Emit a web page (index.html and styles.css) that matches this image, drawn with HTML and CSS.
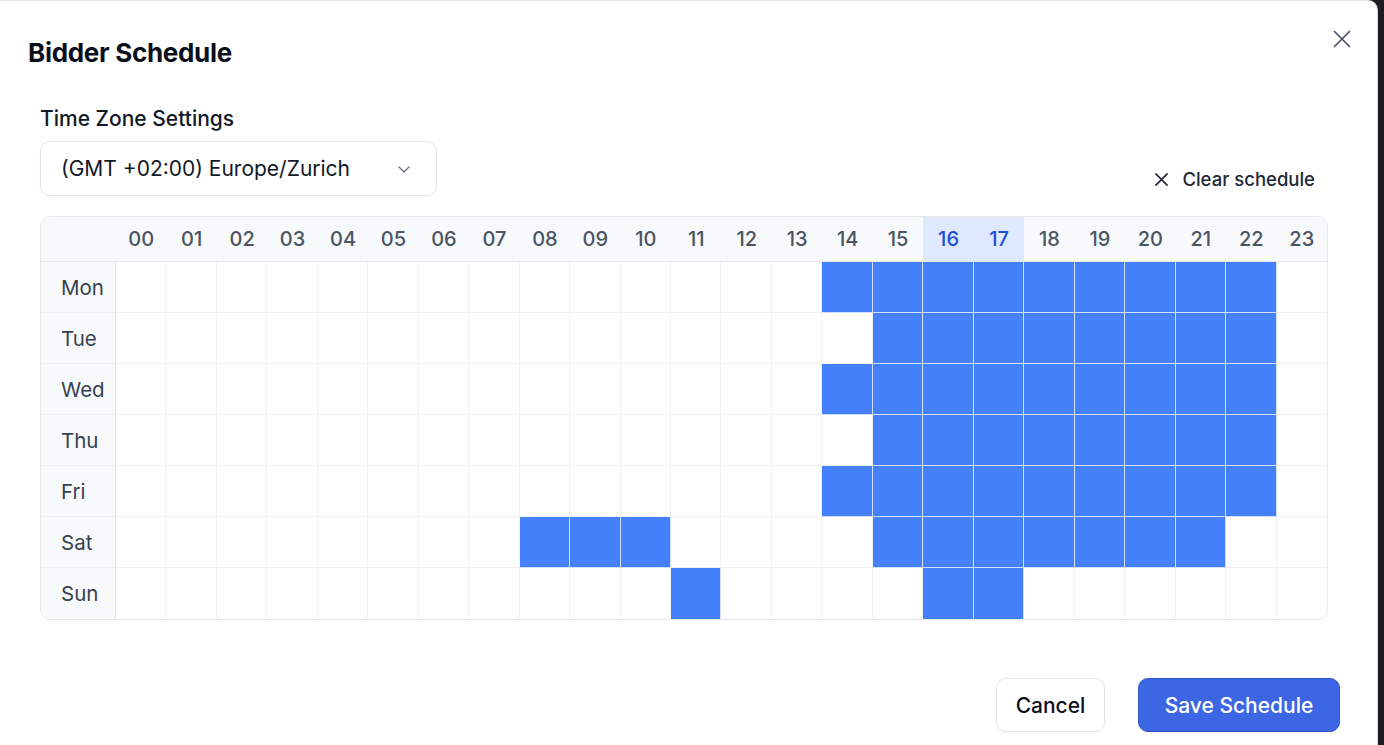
FILE: index.html
```html
<!DOCTYPE html>
<html>
<head>
<meta charset="utf-8">
<link rel="stylesheet" href="styles.css">
</head>
<body>
<div class="modal">
  <div class="head">
    <h1 class="title">Bidder Schedule</h1>
    <button class="close" aria-label="Close">
      <svg width="18" height="18" viewBox="0 0 18 18"><path d="M1.5 1.5L16.5 16.5M16.5 1.5L1.5 16.5" stroke="#4b5563" stroke-width="1.7" stroke-linecap="round"/></svg>
    </button>
  </div>
  <div class="body">
    <div class="label">Time Zone Settings</div>
    <div class="tzrow">
      <div class="select">
        <span>(GMT +02:00) Europe/Zurich</span>
        <svg width="16" height="16" viewBox="0 0 16 16"><path d="M3 6l5 5 5-5" fill="none" stroke="#6b7280" stroke-width="1.4" stroke-linecap="round" stroke-linejoin="round"/></svg>
      </div>
      <button class="clear">
        <svg width="15" height="15" viewBox="0 0 16 16"><path d="M2 2L14 14M14 2L2 14" stroke="#1f2937" stroke-width="1.7" stroke-linecap="round"/></svg>
        <span>Clear schedule</span>
      </button>
    </div>
    <div class="grid">
      <div class="hc corner"></div>
      <div class="hc">00</div><div class="hc">01</div><div class="hc">02</div><div class="hc">03</div><div class="hc">04</div><div class="hc">05</div><div class="hc">06</div><div class="hc">07</div><div class="hc">08</div><div class="hc">09</div><div class="hc">10</div><div class="hc">11</div><div class="hc">12</div><div class="hc">13</div><div class="hc">14</div><div class="hc">15</div><div class="hc hl">16</div><div class="hc hl">17</div><div class="hc">18</div><div class="hc">19</div><div class="hc">20</div><div class="hc">21</div><div class="hc">22</div><div class="hc last">23</div>

      <div class="day">Mon</div>
      <div class="c"></div><div class="c"></div><div class="c"></div><div class="c"></div><div class="c"></div><div class="c"></div><div class="c"></div><div class="c"></div><div class="c"></div><div class="c"></div><div class="c"></div><div class="c"></div><div class="c"></div><div class="c"></div><div class="c on"></div><div class="c on"></div><div class="c on"></div><div class="c on"></div><div class="c on"></div><div class="c on"></div><div class="c on"></div><div class="c on"></div><div class="c on"></div><div class="c last"></div>

      <div class="day">Tue</div>
      <div class="c"></div><div class="c"></div><div class="c"></div><div class="c"></div><div class="c"></div><div class="c"></div><div class="c"></div><div class="c"></div><div class="c"></div><div class="c"></div><div class="c"></div><div class="c"></div><div class="c"></div><div class="c"></div><div class="c"></div><div class="c on"></div><div class="c on"></div><div class="c on"></div><div class="c on"></div><div class="c on"></div><div class="c on"></div><div class="c on"></div><div class="c on"></div><div class="c last"></div>

      <div class="day">Wed</div>
      <div class="c"></div><div class="c"></div><div class="c"></div><div class="c"></div><div class="c"></div><div class="c"></div><div class="c"></div><div class="c"></div><div class="c"></div><div class="c"></div><div class="c"></div><div class="c"></div><div class="c"></div><div class="c"></div><div class="c on"></div><div class="c on"></div><div class="c on"></div><div class="c on"></div><div class="c on"></div><div class="c on"></div><div class="c on"></div><div class="c on"></div><div class="c on"></div><div class="c last"></div>

      <div class="day">Thu</div>
      <div class="c"></div><div class="c"></div><div class="c"></div><div class="c"></div><div class="c"></div><div class="c"></div><div class="c"></div><div class="c"></div><div class="c"></div><div class="c"></div><div class="c"></div><div class="c"></div><div class="c"></div><div class="c"></div><div class="c"></div><div class="c on"></div><div class="c on"></div><div class="c on"></div><div class="c on"></div><div class="c on"></div><div class="c on"></div><div class="c on"></div><div class="c on"></div><div class="c last"></div>

      <div class="day">Fri</div>
      <div class="c"></div><div class="c"></div><div class="c"></div><div class="c"></div><div class="c"></div><div class="c"></div><div class="c"></div><div class="c"></div><div class="c"></div><div class="c"></div><div class="c"></div><div class="c"></div><div class="c"></div><div class="c"></div><div class="c on"></div><div class="c on"></div><div class="c on"></div><div class="c on"></div><div class="c on"></div><div class="c on"></div><div class="c on"></div><div class="c on"></div><div class="c on"></div><div class="c last"></div>

      <div class="day">Sat</div>
      <div class="c"></div><div class="c"></div><div class="c"></div><div class="c"></div><div class="c"></div><div class="c"></div><div class="c"></div><div class="c"></div><div class="c on"></div><div class="c on"></div><div class="c on"></div><div class="c"></div><div class="c"></div><div class="c"></div><div class="c"></div><div class="c on"></div><div class="c on"></div><div class="c on"></div><div class="c on"></div><div class="c on"></div><div class="c on"></div><div class="c on"></div><div class="c"></div><div class="c last"></div>

      <div class="day bottom">Sun</div>
      <div class="c bottom"></div><div class="c bottom"></div><div class="c bottom"></div><div class="c bottom"></div><div class="c bottom"></div><div class="c bottom"></div><div class="c bottom"></div><div class="c bottom"></div><div class="c bottom"></div><div class="c bottom"></div><div class="c bottom"></div><div class="c bottom on"></div><div class="c bottom"></div><div class="c bottom"></div><div class="c bottom"></div><div class="c bottom"></div><div class="c bottom on"></div><div class="c bottom on"></div><div class="c bottom"></div><div class="c bottom"></div><div class="c bottom"></div><div class="c bottom"></div><div class="c bottom"></div><div class="c bottom last"></div>
    </div>
  </div>
  <div class="foot">
    <button class="btn cancel">Cancel</button>
    <button class="btn save">Save Schedule</button>
  </div>
</div>
</body>
</html>
```
FILE: styles.css
```css
html, body {
  margin: 0;
  padding: 0;
}
body {
  background: #1c1c1e;
  width: 1384px;
  height: 745px;
  overflow: hidden;
  font-family: Inter, "Noto Sans", "Liberation Sans", sans-serif;
}
.modal {
  box-sizing: border-box;
  width: 1378px;
  height: 745px;
  background: #ffffff;
  border-top: 1px solid #e6e7ea;
  border-right: 1px solid #d9dadd;
  border-top-right-radius: 10px;
  display: flex;
  flex-direction: column;
}
.head {
  display: flex;
  justify-content: space-between;
  align-items: flex-start;
  padding: 36px 21px 0 28px;
}
.title {
  margin: 0;
  font-size: 26px;
  line-height: 32px;
  font-weight: 700;
  letter-spacing: -0.3px;
  color: #0b0f1a;
}
.close {
  border: 0;
  background: transparent;
  padding: 0;
  margin-top: -12px;
  width: 28px;
  height: 28px;
  display: flex;
  align-items: center;
  justify-content: center;
  cursor: pointer;
}
.body {
  padding: 0 50px 0 40px;
}
.label {
  margin-top: 38px;
  font-size: 21px;
  line-height: 24px;
  font-weight: 500;
  color: #111827;
}
.tzrow {
  margin-top: 10px;
  display: flex;
  justify-content: space-between;
  align-items: flex-start;
}
.select {
  box-sizing: border-box;
  width: 397px;
  height: 55px;
  border: 1px solid #e3e5e8;
  border-radius: 10px;
  box-shadow: 0 1px 2px rgba(0, 0, 0, 0.04);
  display: flex;
  align-items: center;
  justify-content: space-between;
  padding: 0 24px 0 20px;
  font-size: 21px;
  color: #111827;
}
.clear {
  margin-top: 27px;
  border: 0;
  background: transparent;
  display: flex;
  align-items: center;
  gap: 13px;
  padding: 0 12px 0 12px;
  font-family: inherit;
  font-size: 18.5px;
  font-weight: 500;
  color: #1f2937;
  cursor: pointer;
}
.grid {
  margin-top: 20px;
  box-sizing: border-box;
  width: 1288px;
  display: grid;
  grid-template-columns: 75px repeat(24, 1fr);
  grid-template-rows: 45px repeat(7, 51px);
  border: 1px solid #e6e8eb;
  border-radius: 10px;
  overflow: hidden;
}
.hc {
  background: #f8f9fb;
  border-bottom: 1px solid #e6e8eb;
  display: flex;
  align-items: center;
  justify-content: center;
  font-size: 20px;
  font-weight: 500;
  color: #4b5563;
}
.hc.hl {
  background: #dfe9fd;
  color: #1d4ed8;
}
.day {
  background: #f8f9fb;
  border-right: 1px solid #e6e8eb;
  border-bottom: 1px solid #f0f1f3;
  display: flex;
  align-items: center;
  padding-left: 20px;
  font-size: 20.5px;
  color: #374151;
}
.c {
  border-right: 1px solid #f0f1f3;
  border-bottom: 1px solid #f0f1f3;
  background: #ffffff;
}
.c.on {
  background: #4380fa;
  border-right-color: #d3def8;
  border-bottom-color: #d3def8;
}
.c.last {
  border-right: 0;
}
.bottom {
  border-bottom: 0;
}
.foot {
  margin-top: auto;
  display: flex;
  justify-content: flex-end;
  gap: 33px;
  padding: 0 37px 13px 0;
}
.btn {
  box-sizing: border-box;
  height: 54px;
  border-radius: 10px;
  font-family: inherit;
  font-size: 21px;
  font-weight: 500;
  cursor: pointer;
}
.cancel {
  width: 109px;
  background: #ffffff;
  border: 1px solid #e3e5e8;
  color: #0b0f1a;
  box-shadow: 0 1px 2px rgba(0, 0, 0, 0.04);
}
.save {
  width: 202px;
  background: #3c66e3;
  border: 1px solid #2f55c6;
  color: #ffffff;
  font-weight: 500;
}
```
